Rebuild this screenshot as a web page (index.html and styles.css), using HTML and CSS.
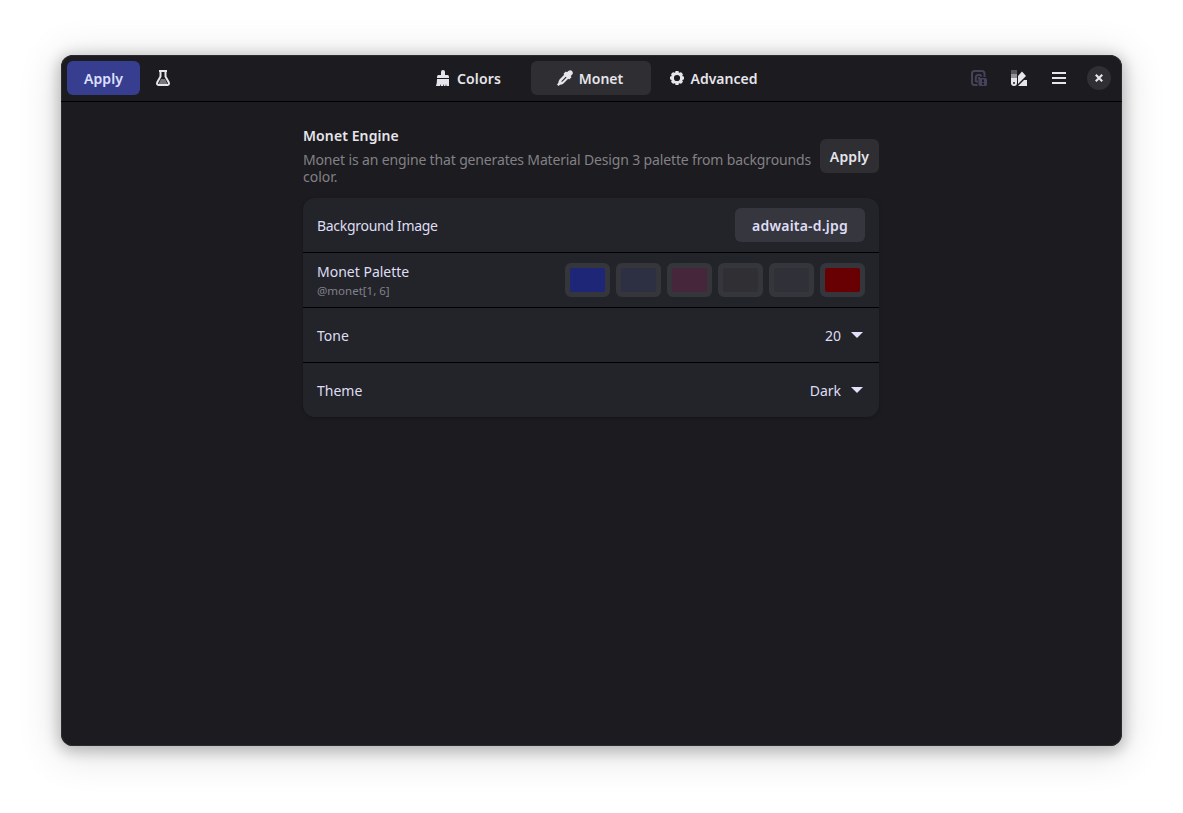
FILE: index.html
```html
<!DOCTYPE html>
<html lang="en">
<head>
<meta charset="utf-8">
<title>Monet</title>
<link rel="stylesheet" href="styles.css">
</head>
<body>
<main class="window">
  <header class="headerbar">
    <div class="start">
      <button class="btn suggested">Apply</button>
      <svg class="icon" viewBox="0 0 16 16"><path d="M6 9h4l2.500 5h-9z" fill="#77767a"/><path d="M5.500 1v5.500L2.200 12.500Q1.500 15 3.500 15h9q2 0 1.300-2.500L10.500 6.500V1" fill="none" stroke="#e6e5eb" stroke-width="2"/><path d="M4 1h8" stroke="#e6e5eb" stroke-width="2"/></svg>
    </div>
    <nav class="switcher">
      <div class="tab colors"><svg class="icon" viewBox="0 0 16 16"><path d="M6 2a2 2 0 0 1 4 0v3h2.500Q14 5 14 7v1H2V7q0-2 1.500-2H6zM2 9h12v7h-2.500l-.5-2-.5 2H9l-.5-2L8 16H6l-.5-2L5 16H1q1-3 1-7z"/></svg><span>Colors</span></div>
      <div class="tab monet active"><svg class="icon" viewBox="0 0 16 16"><path fill-rule="evenodd" d="M15 1q1.700 2 0 3.700L13.700 6l.800 1.200-2.300 2.300-1-.7L6.500 13.500q-1.500 1.200-3.500 1.200L1.500 16 0 14.500 1.300 13q0-2 1.200-3.500L7.200 4.800 6.500 3.800l2.300-2.300 1.200.800L11.300 1Q13.500-.7 15 1zM8.700 6.700l-3.900 4-.5 1.300 1.300-.5 4-3.900z"/></svg><span>Monet</span></div>
      <div class="tab advanced"><svg class="icon" viewBox="0 0 16 16"><g fill="none" stroke="#e6e5eb"><circle cx="8" cy="8" r="4.600" stroke-width="3"/><path stroke-width="3.200" d="M8 1v2.500M8 12.500V15M1 8h2.500M12.500 8H15M3.050 3.050l1.500 1.500M11.450 11.450l1.500 1.500M3.050 12.950l1.500-1.500M11.450 4.550l1.500-1.500"/></g></svg><span>Advanced</span></div>
    </nav>
    <div class="end">
      <svg class="icon dim" viewBox="0 0 16 16"><path d="M6.500 15H3.500Q1 15 1 12.500V3.500Q1 1 3.500 1h7.500q2.500 0 2.500 2.500V7M4.800 12V8a3 3 0 0 1 5.700-1.500M5 11.500h2M8 7v2" fill="none" stroke="#444359" stroke-width="2"/><path fill="#444359" fill-rule="evenodd" d="M9 8h5.500Q16 8 16 9.500v5q0 1.500-1.500 1.500H9q-1.500 0-1.500-1.500v-5Q7.500 8 9 8zm2 1.500v2.700h2V9.500zm0 3.500v1.700h2V13z"/></svg>
      <svg class="icon" viewBox="0 0 16 16"><path d="M0 0h6v4H0z" fill="#58575c"/><path d="M0 4h6v4H0z" fill="#939297"/><path fill="#e6e5eb" fill-rule="evenodd" d="M0 8h6v5a3 3 0 0 1-6 0zm3 4a1 1 0 1 0 0 2 1 1 0 0 0 0-2z"/><path fill="#e6e5eb" d="M7 6l4-4.500L15 6l-8 8zM16 10v6H7l6-6z"/></svg>
      <svg class="icon menu" viewBox="0 0 16 16"><path d="M1 3h14M1 8h14M1 13h14" stroke="#e6e5eb" stroke-width="2"/></svg>
      <button class="close"><svg viewBox="0 0 8 8"><path d="M.8.800l6.400 6.400M7.200.800L.8 7.200" stroke="#e6e5eb" stroke-width="2.200"/></svg></button>
    </div>
  </header>
  <section class="page">
    <div class="intro">
      <div class="copy"><h1>Monet Engine</h1><p><span class="first">Monet is an engine that generates Material Design 3 palette from backgrounds</span><br>color.</p></div>
      <button class="btn flat">Apply</button>
    </div>
    <div class="list">
      <div class="row"><span class="name bg">Background Image</span><button class="btn file">adwaita-d.jpg</button></div>
      <div class="row"><div class="label"><span>Monet Palette</span><small>@monet[1, 6]</small></div>
        <div class="swatches"><i class="swatch c1"></i><i class="swatch c2"></i><i class="swatch c3"></i><i class="swatch c4"></i><i class="swatch c5"></i><i class="swatch c6"></i></div></div>
      <div class="row"><span class="name">Tone</span><div class="value"><span class="name">20</span><svg viewBox="0 0 12 6"><path d="M0 0h12L6 6z"/></svg></div></div>
      <div class="row"><span class="name">Theme</span><div class="value"><span class="name">Dark</span><svg viewBox="0 0 12 6"><path d="M0 0h12L6 6z"/></svg></div></div>
    </div>
  </section>
</main>
</body>
</html>
```
FILE: styles.css
```css
* { box-sizing: border-box; }
body { margin: 0; height: 813px; padding: 55px 61px; overflow: hidden; background: #fff; font: 14px/20px "Noto Sans", sans-serif; color: #dfddf4; }
button { border: 0; font: inherit; color: inherit; padding: 0; }
.window { width: 1061px; height: 691px; border-radius: 12px; background: #1c1b1f; overflow: hidden; box-shadow: inset 0 0 0 1px #2b2a2e, 0 3px 14px 3px rgba(0,0,0,.22), 0 5px 40px 5px rgba(0,0,0,.12); }
.headerbar { height: 47px; padding: 0 11px 1px 6px; border-bottom: 1px solid #000; display: grid; grid-template-columns: 349px 361px 1fr; align-items: center; color: #e6e5eb; font-weight: 600; }
.start, .end, .switcher, .tab { display: flex; align-items: center; }
.start { gap: 15px; }
.end { justify-content: flex-end; gap: 24px; }
.icon { width: 16px; height: 16px; fill: #e6e5eb; flex: none; }
.btn { height: 34px; padding-top: 2px; border-radius: 6px; font-weight: 600; white-space: nowrap; flex: none; }
.suggested { width: 73px; background: #373e8f; color: #dfe0ff; letter-spacing: .1px; }
.switcher { height: 34px; }
.tab { height: 34px; gap: 6px; padding-right: 2px; justify-content: center; border-radius: 6px; flex: none; }
.tab span { padding-top: 2px; }
.colors { width: 106px; letter-spacing: .15px; }
.monet { width: 120px; margin-left: 9px; }
.advanced { width: 126px; }
.active { background: #2f2e33; }
.close { width: 24px; height: 24px; border-radius: 50%; background: #302f33; display: grid; place-items: center; margin-left: -4px; }
.close svg { width: 8px; height: 8px; }
.page { width: 576px; margin: 24px 0 0 242px; }
.intro { display: flex; height: 72px; }
.copy { width: 517px; flex: none; white-space: nowrap; }
.copy h1 { margin: 0; font-size: 14px; line-height: 20px; font-weight: 600; color: #e6e5eb; letter-spacing: .1px; }
.copy p { margin: 5px 0 0; line-height: 17px; color: #828186; }
.first { letter-spacing: -.15px; }
.flat { width: 59px; background: #2f2e33; color: #e6e5eb; margin-top: 13px; letter-spacing: .15px; }
.list { border-radius: 12px; background: #232429; overflow: hidden; box-shadow: 0 1px 3px #17161a; }
.row { height: 55px; padding: 0 14px; border-bottom: 1px solid #000; display: flex; justify-content: space-between; align-items: center; }
.row:last-child { border: 0; height: 54px; }
.name { padding-top: 2px; }
.bg { letter-spacing: -.3px; }
.file { width: 130px; background: #36363f; color: #dfddf4; letter-spacing: .2px; }
.label { display: flex; flex-direction: column; }
.label small { font-size: 11.500px; line-height: 17px; color: #828089; }
.swatches { display: flex; gap: 6px; }
.swatch { width: 45px; height: 34px; border: 5px solid #35363b; border-radius: 6px; background: #35363b; display: grid; }
.swatch::before { content: ""; border-radius: 2px; background: var(--tone); }
.c1 { --tone: #1e2678; } .c2 { --tone: #2d2f42; } .c3 { --tone: #46263b; }
.c4 { --tone: #303034; } .c5 { --tone: #303038; } .c6 { --tone: #680003; }
.value { display: flex; align-items: center; gap: 10px; padding-right: 2px; }
.value svg { width: 12px; height: 6px; fill: #e4e0fc; }
```
